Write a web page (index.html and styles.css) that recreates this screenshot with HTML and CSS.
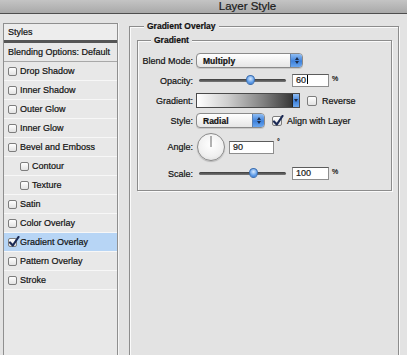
FILE: index.html
```html
<!DOCTYPE html>
<html lang="en">
<head>
    <meta charset="UTF-8">
    <title>Layer Style</title>
    <link rel="stylesheet" href="styles.css">
</head>
<body>
    <div class="titlebar">Layer Style</div>

    <div class="dialog">
        <aside class="sidebar">
            <div class="side-head styles-head">Styles</div>
            <div class="side-head blend-head">Blending Options: Default</div>
            <ul class="fx-list">
                <li class="fx"><span class="cb"></span>Drop Shadow</li>
                <li class="fx"><span class="cb"></span>Inner Shadow</li>
                <li class="fx"><span class="cb"></span>Outer Glow</li>
                <li class="fx"><span class="cb"></span>Inner Glow</li>
                <li class="fx"><span class="cb"></span>Bevel and Emboss</li>
                <li class="fx sub"><span class="cb"></span>Contour</li>
                <li class="fx sub"><span class="cb"></span>Texture</li>
                <li class="fx"><span class="cb"></span>Satin</li>
                <li class="fx"><span class="cb"></span>Color Overlay</li>
                <li class="fx active">
                    <span class="cb checked">
                        <svg viewBox="0 0 12 12" width="12" height="12"><path d="M2 6.5 L4.8 9.5 L10.5 1" fill="none" stroke="#1b2a55" stroke-width="2.2" stroke-linecap="round" stroke-linejoin="round"/></svg>
                    </span>Gradient Overlay
                </li>
                <li class="fx"><span class="cb"></span>Pattern Overlay</li>
                <li class="fx"><span class="cb"></span>Stroke</li>
            </ul>
        </aside>

        <main class="panel">
            <div class="group outer">
                <span class="legend">Gradient Overlay</span>
                <div class="group inner">
                    <span class="legend">Gradient</span>

                    <div class="row">
                        <label class="lbl">Blend Mode:</label>
                        <div class="popup popup-wide">
                            <span class="popup-text">Multiply</span>
                            <span class="stepper"><i class="up"></i><i class="down"></i></span>
                        </div>
                    </div>

                    <div class="row">
                        <label class="lbl">Opacity:</label>
                        <div class="slider">
                            <span class="track"></span>
                            <span class="thumb" style="left: 59%;"></span>
                        </div>
                        <div class="field field-num">60<span class="caret"></span></div>
                        <span class="unit">%</span>
                    </div>

                    <div class="row">
                        <label class="lbl">Gradient:</label>
                        <div class="swatch">
                            <span class="swatch-btn"><i class="down"></i></span>
                        </div>
                        <span class="cb cb-right"></span>
                        <span class="opt">Reverse</span>
                    </div>

                    <div class="row">
                        <label class="lbl">Style:</label>
                        <div class="popup popup-narrow">
                            <span class="popup-text">Radial</span>
                            <span class="stepper"><i class="up"></i><i class="down"></i></span>
                        </div>
                        <span class="cb cb-right checked">
                            <svg viewBox="0 0 12 12" width="12" height="12"><path d="M2 6.5 L4.8 9.5 L10.5 1" fill="none" stroke="#1b2a55" stroke-width="2.2" stroke-linecap="round" stroke-linejoin="round"/></svg>
                        </span>
                        <span class="opt">Align with Layer</span>
                    </div>

                    <div class="row row-angle">
                        <label class="lbl">Angle:</label>
                        <div class="dial">
                            <svg viewBox="0 0 28 28" width="28" height="28">
                                <line x1="14" y1="14" x2="14" y2="3" stroke="#666" stroke-width="1"/>
                            </svg>
                        </div>
                        <div class="field field-angle">90</div>
                        <span class="unit deg">°</span>
                    </div>

                    <div class="row">
                        <label class="lbl">Scale:</label>
                        <div class="slider">
                            <span class="track"></span>
                            <span class="thumb" style="left: 62%;"></span>
                        </div>
                        <div class="field field-num">100</div>
                        <span class="unit">%</span>
                    </div>
                </div>
            </div>
        </main>
    </div>
</body>
</html>
```

FILE: styles.css
```css
* { margin: 0; padding: 0; box-sizing: border-box; }
body {
    font-family: "Liberation Sans", Arial, sans-serif;
    font-size: 9px;
    color: #111;
    -webkit-text-stroke: 0.2px #111;
    background: #e3e3e3;
    width: 407px;
    height: 355px;
    overflow: hidden;
}
.titlebar {
    height: 14px;
    line-height: 13px;
    padding-left: 88px;
    text-align: center;
    font-size: 11.5px;
    color: #1e1e1e;
    background: linear-gradient(#c4c4c4, #a9a9a9);
    border-bottom: 1px solid #4e4e4e;
}
.dialog {
    display: flex;
    gap: 11px;
    padding: 9px 0 0 3px;
    height: 341px;
}

/* Left column */
.sidebar {
    width: 115px;
    flex-shrink: 0;
    background: #e8e8e8;
    border: 1px solid #8f8f8f;
    border-bottom: none;
    box-shadow: 1px 0 0 #f6f6f6;
}
.side-head {
    padding-left: 4px;
    display: flex;
    align-items: center;
}
.styles-head {
    height: 19px;
    background: #ededed;
    border-bottom: 3px solid #555;
}
.blend-head {
    height: 19px;
    border-bottom: 1px solid #a8a8a8;
}
.fx-list { list-style: none; }
.fx {
    height: 19px;
    display: flex;
    align-items: center;
    padding-left: 4px;
    border-bottom: 1px solid #f7f7f7;
}
.fx.sub { padding-left: 16px; }
.fx.active { background: #b7d5f5; }
.cb {
    position: relative;
    width: 9px;
    height: 9px;
    margin-right: 3px;
    border: 1px solid #7d7d7d;
    border-radius: 2px;
    background: linear-gradient(#ffffff, #e2e2e2);
    flex-shrink: 0;
}
.cb svg {
    position: absolute;
    left: -1px;
    top: -3px;
}

/* Right panel */
.panel {
    flex: 1;
    padding-top: 3px;
}
.group {
    position: relative;
    border: 1px solid #8c8c8c;
    box-shadow: 1px 1px 0 #fafafa, inset 1px 1px 0 #fafafa;
}
.outer {
    width: 270px;
    height: 340px;
    padding: 13px 6px 0 7px;
}
.inner {
    width: 255px;
    height: 151px;
    padding: 12px 0 0 0;
    display: flex;
    flex-direction: column;
    gap: 5px;
}
.legend {
    position: absolute;
    top: -6px;
    left: 14px;
    padding: 0 3px;
    background: #e3e3e3;
    font-weight: bold;
    font-size: 8.5px;
    line-height: 10px;
}
.inner .legend { left: 13px; }

.row {
    display: flex;
    align-items: center;
    height: 15px;
}
.row-angle { height: 28px; }
.lbl {
    width: 58px;
    padding-right: 3px;
    text-align: right;
    flex-shrink: 0;
}

.popup {
    position: relative;
    height: 15px;
    display: flex;
    align-items: center;
    border: 1px solid #8a8a8a;
    border-radius: 4px;
    background: linear-gradient(#ffffff, #e6e6e6);
    box-shadow: 0 1px 0 #c8c8c8;
    overflow: hidden;
}
.popup-wide { width: 107px; }
.popup-narrow { width: 69px; }
.popup-text {
    flex: 1;
    padding-left: 6px;
    font-weight: bold;
    font-size: 8.5px;
}
.stepper {
    width: 12px;
    height: 100%;
    display: flex;
    flex-direction: column;
    align-items: center;
    justify-content: center;
    gap: 1px;
    background: linear-gradient(#8fbdf3, #3f82dc 55%, #6aa6ee);
    border-left: 1px solid #5a7fb0;
}
.up, .down {
    width: 0;
    height: 0;
    border-left: 2px solid transparent;
    border-right: 2px solid transparent;
}
.up { border-bottom: 3px solid #1d2d4a; }
.down { border-top: 3px solid #1d2d4a; }

.slider {
    position: relative;
    width: 87px;
    height: 15px;
    margin-left: 3px;
}
.track {
    position: absolute;
    left: 0;
    right: 0;
    top: 6px;
    height: 3px;
    border-radius: 2px;
    background: linear-gradient(#3c3c3c, #7a7a7a);
}
.thumb {
    position: absolute;
    top: 2px;
    width: 9px;
    height: 10px;
    margin-left: -4px;
    border-radius: 50% 50% 50% 50% / 45% 45% 55% 55%;
    border: 1px solid #3d6fb0;
    background: radial-gradient(circle at 50% 35%, #d6e8fd, #5d9ce8 60%, #3b78cf);
}

.field {
    height: 13px;
    line-height: 11px;
    padding-left: 3px;
    background: #fff;
    border: 1px solid #8e8e8e;
    border-top-color: #5c5c5c;
    font-size: 9px;
    color: #222;
}
.field-num {
    width: 37px;
    margin-left: 6px;
}
.caret {
    display: inline-block;
    width: 1px;
    height: 9px;
    margin-left: 1px;
    vertical-align: -1px;
    background: #000;
}
.unit {
    margin-left: 3px;
    font-size: 7px;
    align-self: flex-start;
    margin-top: 2px;
}

.swatch {
    position: relative;
    width: 104px;
    height: 15px;
    border: 1px solid #4a4a4a;
    background: linear-gradient(90deg, #ffffff 0%, #cfcfcf 30%, #808080 65%, #333 95%);
    display: flex;
    justify-content: flex-end;
}
.swatch-btn {
    width: 7px;
    height: 100%;
    display: flex;
    align-items: center;
    justify-content: center;
    background: linear-gradient(#8fbdf3, #3f82dc 55%, #6aa6ee);
    border-left: 1px solid #222;
}
.cb-right {
    width: 10px;
    height: 10px;
    margin-left: 7px;
    margin-right: 5px;
}
.cb-right svg { top: -2px; }
.opt { font-size: 9px; }

.dial {
    width: 28px;
    height: 28px;
    margin-left: 1px;
    border-radius: 50%;
    border: 1px solid #8a8a8a;
    background: radial-gradient(circle at 50% 40%, #ffffff, #f0f0f0 60%, #d4d4d4);
    box-shadow: 0 1px 1px #b8b8b8;
}
.dial svg { display: block; margin: -1px 0 0 -1px; }
.field-angle {
    width: 45px;
    margin-left: 4px;
}
.deg { margin-top: 5px; }
```
